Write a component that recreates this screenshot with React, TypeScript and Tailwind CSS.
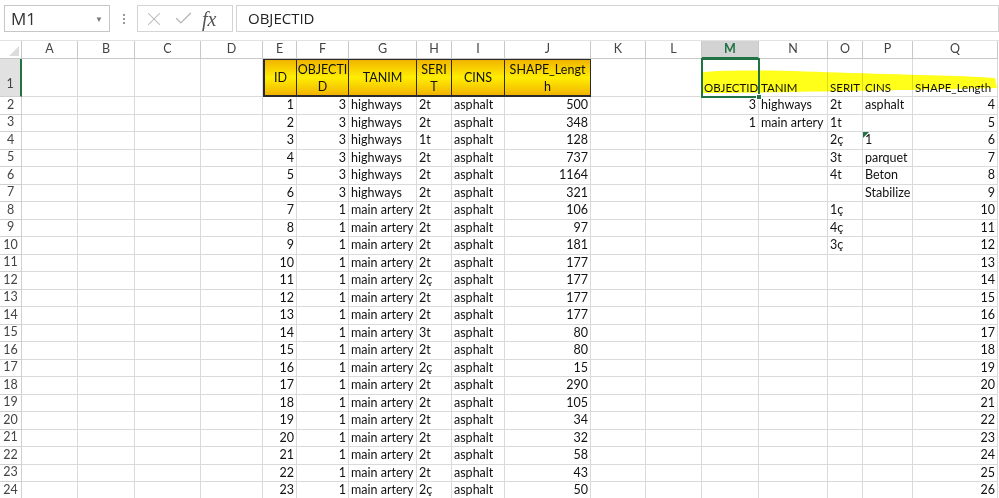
import {X, Check} from "lucide-react";

// ─── Data ─────────────────────────────────────────────────────────────────────

const COLS = ["A", "B", "C", "D", "E", "F", "G", "H", "I", "J", "K", "L", "M", "N", "O", "P", "Q"];

type Row = [number, number, string, string, string, number];

const LEFT: Row[] = [
    [1, 3, "highways", "2t", "asphalt", 500],
    [2, 3, "highways", "2t", "asphalt", 348],
    [3, 3, "highways", "1t", "asphalt", 128],
    [4, 3, "highways", "2t", "asphalt", 737],
    [5, 3, "highways", "2t", "asphalt", 1164],
    [6, 3, "highways", "2t", "asphalt", 321],
    [7, 1, "main artery", "2t", "asphalt", 106],
    [8, 1, "main artery", "2t", "asphalt", 97],
    [9, 1, "main artery", "2t", "asphalt", 181],
    [10, 1, "main artery", "2t", "asphalt", 177],
    [11, 1, "main artery", "2ç", "asphalt", 177],
    [12, 1, "main artery", "2t", "asphalt", 177],
    [13, 1, "main artery", "2t", "asphalt", 177],
    [14, 1, "main artery", "3t", "asphalt", 80],
    [15, 1, "main artery", "2t", "asphalt", 80],
    [16, 1, "main artery", "2ç", "asphalt", 15],
    [17, 1, "main artery", "2t", "asphalt", 290],
    [18, 1, "main artery", "2t", "asphalt", 105],
    [19, 1, "main artery", "2t", "asphalt", 34],
    [20, 1, "main artery", "2t", "asphalt", 32],
    [21, 1, "main artery", "2t", "asphalt", 58],
    [22, 1, "main artery", "2t", "asphalt", 43],
    [23, 1, "main artery", "2ç", "asphalt", 50]
];

// M..P for rows 2..10 (Q just counts up)
const RIGHT: [string, string, string, string][] = [
    ["3", "highways", "2t", "asphalt"],
    ["1", "main artery", "1t", ""],
    ["", "", "2ç", "1"],
    ["", "", "3t", "parquet"],
    ["", "", "4t", "Beton"],
    ["", "", "", "Stabilize"],
    ["", "", "1ç", ""],
    ["", "", "4ç", ""],
    ["", "", "3ç", ""]
];

const YELLOW_HEADERS: string[][] = [
    ["ID"],
    ["OBJECTI", "D"],
    ["TANIM"],
    ["SERI", "T"],
    ["CINS"],
    ["SHAPE_Lengt", "h"]
];

const CELL = "border-r border-b border-[#dadada] flex items-center overflow-hidden whitespace-nowrap text-[12.5px] leading-none text-[#111]";
const NUM = CELL + " justify-end pr-[2px]";
const TXT = CELL + " pl-[2px]";
const ROWHEAD = "border-r border-b border-[#d0d0d0] bg-white flex items-center justify-center text-[12.5px] text-[#444]";
const HEAD_TXT = "border-r border-b border-[#dadada] flex items-end pl-[2px] pb-[3px] text-[11.5px] leading-none text-[#111] whitespace-nowrap";

// ─── Component ────────────────────────────────────────────────────────────────

export default function App() {
    return (
        <div className="w-[999px] h-[498px] overflow-hidden bg-white font-[Lato,sans-serif]">
            {/* Formula bar */}
            <div className="h-[40px] flex items-start pt-[5px] pl-[4px]">
                <div className="w-[106px] h-[27px] border border-[#c6c6c6] flex items-center justify-between pl-[6px] pr-[6px]">
                    <span className="text-[17px] text-[#333] font-['Open_Sans',sans-serif]">M1</span>
                    <span className="text-[8px] text-[#777]">▼</span>
                </div>
                <div className="w-[27px] h-[27px] flex flex-col items-center justify-center gap-[2px]">
                    <span className="w-[2px] h-[2px] bg-[#9a9a9a]" />
                    <span className="w-[2px] h-[2px] bg-[#9a9a9a]" />
                    <span className="w-[2px] h-[2px] bg-[#9a9a9a]" />
                </div>
                <div className="w-[96px] h-[27px] border border-[#d4d4d4] flex items-center pl-[5px] gap-[8px]">
                    <X size={22} strokeWidth={1.1} className="text-[#b5b5b5]" />
                    <Check size={21} strokeWidth={1.5} className="text-[#b5b5b5]" />
                    <span className="font-['Liberation_Serif',serif] italic text-[20px] text-[#555] leading-none">fx</span>
                </div>
                <div className="ml-[3px] flex-1 h-[27px] border border-[#d4d4d4] flex items-center pl-[11px]">
                    <span className="text-[15px] text-[#222] font-['Open_Sans',sans-serif]">OBJECTID</span>
                </div>
            </div>

            {/* Sheet */}
            <div className="relative grid grid-cols-[22px_56px_57px_66px_62px_34px_52px_68px_35px_53px_86px_55px_56px_57px_69px_35px_50px_85px] grid-rows-[18px_38px_repeat(23,17.5px)] border-t border-[#e2e2e2]">
                {/* Column headers */}
                <div className="border-r border-b border-[#c8c8c8] bg-white relative">
                    <svg width="22" height="18" className="absolute inset-0">
                        <polygon points="9,15 19,5 19,15" fill="#dcdcdc" />
                    </svg>
                </div>
                {COLS.map(c =>
                    c === "M" ? (
                        <div
                            key={c}
                            className="border-r border-[#c8c8c8] border-b-2 border-b-[#217346] bg-[#d3d3d3] flex items-center justify-center text-[12.5px] font-bold text-[#217346]"
                        >
                            {c}
                        </div>
                    ) : (
                        <div
                            key={c}
                            className="border-r border-b border-[#c8c8c8] bg-white flex items-center justify-center text-[12.5px] text-[#444]"
                        >
                            {c}
                        </div>
                    )
                )}

                {/* Row 1 */}
                <div className="border-b border-[#d0d0d0] border-r-2 border-r-[#217346] bg-[#e1e1e1] flex items-end justify-center pb-[2px] text-[12.5px] text-[#444]">
                    1
                </div>
                <div className={CELL} />
                <div className={CELL} />
                <div className={CELL} />
                <div className={CELL} />
                {YELLOW_HEADERS.map((lines, i) => (
                    <div
                        key={i}
                        className={
                            "border-t border-r border-b-2 border-[#2a2a2a] bg-gradient-to-b from-[#f1b400] via-[#ffee00] to-[#f1b400] flex flex-col items-center justify-center text-[12.5px] leading-[17px] text-[#111] overflow-hidden " +
                            (i === 0 ? "border-l-2" : "")
                        }
                    >
                        {lines.map(l => (
                            <span key={l}>{l}</span>
                        ))}
                    </div>
                ))}
                <div className={CELL} />
                <div className={CELL} />
                <div className={HEAD_TXT + " relative z-10 outline-2 outline-[#217346] -outline-offset-1"}>
                    OBJECTID
                    <span className="absolute -right-[4px] -bottom-[4px] w-[6px] h-[6px] bg-[#217346] border border-white" />
                </div>
                {["TANIM", "SERIT", "CINS", "SHAPE_Length"].map(t => (
                    <div key={t} className={HEAD_TXT + " overflow-hidden"}>
                        {t}
                    </div>
                ))}

                {/* Rows 2..24 */}
                {LEFT.map((r, i) => {
                    const right = RIGHT[i] ?? ["", "", "", ""];
                    return [
                        <div key={`h${i}`} className={ROWHEAD}>{i + 2}</div>,
                        <div key={`a${i}`} className={CELL} />,
                        <div key={`b${i}`} className={CELL} />,
                        <div key={`c${i}`} className={CELL} />,
                        <div key={`d${i}`} className={CELL} />,
                        <div key={`e${i}`} className={NUM}>{r[0]}</div>,
                        <div key={`f${i}`} className={NUM}>{r[1]}</div>,
                        <div key={`g${i}`} className={TXT}>{r[2]}</div>,
                        <div key={`hh${i}`} className={TXT}>{r[3]}</div>,
                        <div key={`i${i}`} className={TXT}>{r[4]}</div>,
                        <div key={`j${i}`} className={NUM}>{r[5]}</div>,
                        <div key={`k${i}`} className={CELL} />,
                        <div key={`l${i}`} className={CELL} />,
                        <div key={`m${i}`} className={NUM}>{right[0]}</div>,
                        <div key={`n${i}`} className={TXT}>{right[1]}</div>,
                        <div key={`o${i}`} className={TXT}>{right[2]}</div>,
                        <div key={`p${i}`} className={TXT + " relative"}>
                            {right[3] === "1" && (
                                <svg width="6" height="6" className="absolute left-0 top-0">
                                    <polygon points="0,0 6,0 0,6" fill="#217346" />
                                </svg>
                            )}
                            {right[3]}
                        </div>,
                        <div key={`q${i}`} className={NUM}>{i + 4}</div>
                    ];
                })}

                {/* Highlighter stroke over row 1, M..Q */}
                <svg
                    width="300"
                    height="32"
                    className="absolute left-[700px] top-[25px] pointer-events-none mix-blend-multiply blur-[0.6px]"
                >
                    <path
                        d="M3,6 C40,3 100,5 150,7 C220,9 270,10 295,12 L297,22 C260,23 200,24 150,25 C90,26 40,27 3,27 Z"
                        fill="#ffff1a"
                    />
                </svg>
            </div>
        </div>
    );
}
